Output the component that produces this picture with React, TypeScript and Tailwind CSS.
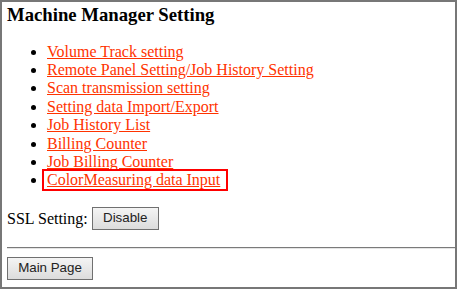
const links = [
  "Volume Track setting",
  "Remote Panel Setting/Job History Setting",
  "Scan transmission setting",
  "Setting data Import/Export",
  "Job History List",
  "Billing Counter",
  "Job Billing Counter",
];

function PageButton({ label, className }: { label: string; className: string }) {
  return (
    <button
      type="button"
      className={`flex items-center justify-center border border-[#707070] bg-gradient-to-b from-[#f4f4f4] to-[#dcdcdc] font-['Liberation_Sans',Arial,sans-serif] text-[13.33px] text-[#222] ${className}`}
    >
      {label}
    </button>
  );
}

export default function App() {
  return (
    <div className="h-[289px] w-[457px] overflow-hidden border-2 border-[#777] bg-white pl-[5px] font-['Liberation_Serif','Times_New_Roman',serif] text-[16px] text-black">
      <h3 className="mt-[2px] text-[18.72px] font-bold leading-[21.5px]">Machine Manager Setting</h3>

      <ul className="mt-[17px] list-disc pl-[40px] leading-[18.4px]">
        {links.map((label) => (
          <li key={label}>
            <a href="#" className="text-[#f30] underline">
              {label}
            </a>
          </li>
        ))}
        <li>
          <span className="-ml-[3px] pb-[1px] pl-[3px] pr-[6px] outline-2 outline-[#f00]">
            <a href="#" className="text-[#f30] underline">
              ColorMeasuring data Input
            </a>
          </span>
        </li>
      </ul>

      <div className="mt-[17px] flex h-[23px] items-center">
        <span className="pt-[2px] leading-[18.4px]">SSL Setting:</span>
        <PageButton label="Disable" className="ml-[4px] h-[23px] w-[67px]" />
      </div>

      <hr className="mt-[17px] border-0 border-t border-b border-t-[#7a7a7a] border-b-[#e4e4e4]" />

      <PageButton label="Main Page" className="mt-[8px] h-[23px] w-[86px]" />
    </div>
  );
}
